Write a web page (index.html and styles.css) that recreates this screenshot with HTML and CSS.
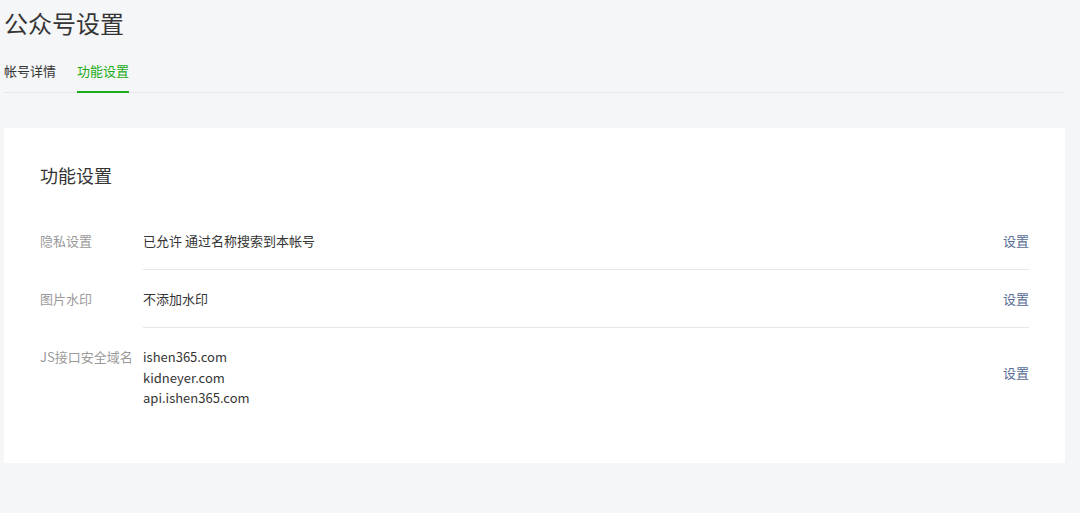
FILE: index.html
```html
<!DOCTYPE html>
<html lang="zh-CN">

<head>
  <meta charset="UTF-8">
  <meta name="viewport" content="width=device-width, initial-scale=1.0">
  <title>公众号设置</title>
  <link rel="stylesheet" href="styles.css">
</head>

<body>
  <div id="wrap">
    <h2 class="page-title">公众号设置</h2>
    <ul class="tabs">
      <li>帐号详情</li>
      <li class="active">功能设置</li>
    </ul>

    <div class="card">
      <h3 class="card-title">功能设置</h3>
      <ul class="rows">
        <li class="row">
          <span class="label">隐私设置</span>
          <div class="value">已允许 通过名称搜索到本帐号</div>
          <a class="link" href="#">设置</a>
        </li>
        <li class="row">
          <span class="label">图片水印</span>
          <div class="value">不添加水印</div>
          <a class="link" href="#">设置</a>
        </li>
        <li class="row">
          <span class="label">JS接口安全域名</span>
          <div class="value">
            <p>ishen365.com</p>
            <p>kidneyer.com</p>
            <p>api.ishen365.com</p>
          </div>
          <a class="link" href="#">设置</a>
        </li>
      </ul>
    </div>
  </div>
</body>

</html>
```

FILE: styles.css
```css
* {
  margin: 0;
  padding: 0;
}

ul li {
  list-style: none;
}

body {
  background: #f5f6f7;
  font-family: "Noto Sans CJK SC", "Noto Sans", sans-serif;
  color: #353535;
}

#wrap {
  width: 1061px;
  margin-left: 4px;
}

/* 页面标题 */
.page-title {
  font-size: 24px;
  font-weight: normal;
  line-height: 32px;
  padding-top: 7px;
  color: #353535;
}

/* 选项卡 */
.tabs {
  display: flex;
  gap: 21px;
  margin-top: 22px;
  border-bottom: 1px solid #e4e8eb;
}

.tabs li {
  font-size: 13px;
  line-height: 20px;
  padding-bottom: 10px;
  border-bottom: 2px solid transparent;
  margin-bottom: -1px;
}

.tabs li.active {
  color: #1aad19;
  border-bottom-color: #1aad19;
}

/* 功能设置卡片 */
.card {
  margin-top: 35px;
  background: #fff;
  border-radius: 2px;
  padding: 34px 36px 36px 36px;
}

.card-title {
  font-size: 18px;
  font-weight: normal;
  line-height: 26px;
  margin-bottom: 24px;
}

.row {
  display: flex;
  align-items: center;
  font-size: 13px;
  line-height: 20px;
}

.row .label {
  width: 103px;
  color: #9a9a9a;
  align-self: flex-start;
  padding-top: 19px;
}

.row .value {
  flex: 1;
  padding: 19px 0 18px;
  border-bottom: 1px solid #e7e7eb;
  align-self: stretch;
  display: flex;
  flex-direction: column;
  justify-content: center;
}

.row:last-child .value {
  border-bottom: none;
  line-height: 20.5px;
}

.row .link {
  color: #576b95;
  text-decoration: none;
  align-self: stretch;
  display: flex;
  align-items: center;
  border-bottom: 1px solid #e7e7eb;
}

.row:last-child .link {
  border-bottom: none;
  padding-bottom: 8px;
}
```
